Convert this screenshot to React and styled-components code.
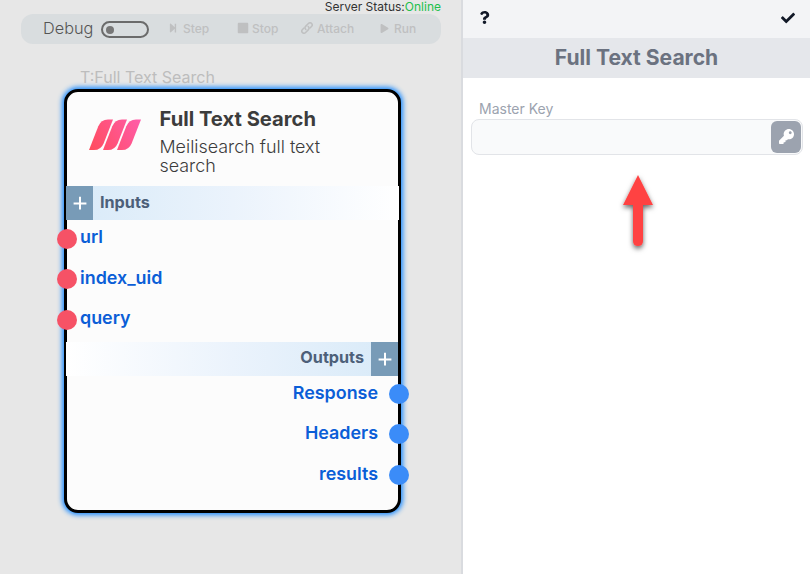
import React from "react";
import styled, { createGlobalStyle } from "styled-components";
import { FaStepForward, FaStop, FaPlay, FaQuestion, FaCheck, FaKey } from "react-icons/fa";

const GlobalStyle = createGlobalStyle`
  * { box-sizing: border-box; }
  body { margin: 0; font-family: Inter, "Liberation Sans", sans-serif; overflow: hidden; }
`;

const Screen = styled.div`
  display: grid;
  grid-template-columns: 463px 347px;
  width: 810px;
  height: 574px;
`;

const Canvas = styled.main`
  background: #e7e7e7;
  border-right: 2px solid #d9dbdf;
  height: 574px;
`;

const Status = styled.div`
  height: 14px;
  padding-right: 20px;
  text-align: right;
  font-size: 12px;
  line-height: 13px;
  color: #333;
  white-space: nowrap;
`;

const Online = styled.span`
  color: #22c04c;
`;

const Toolbar = styled.div`
  display: flex;
  align-items: center;
  width: 420px;
  height: 30px;
  margin-left: 21px;
  padding-left: 22px;
  border-radius: 12px;
  background: #d9dddf;
`;

const DebugLabel = styled.span`
  width: 58px;
  font-size: 16.3px;
  font-weight: 300;
  line-height: 28px;
  margin-bottom: 2px;
  color: #555;
`;

const Switch = styled.span`
  display: flex;
  align-items: center;
  width: 48px;
  height: 17px;
  margin-top: 1px;
  padding-left: 3px;
  border: 2px solid #6b6b6b;
  border-radius: 9px;
`;

const Knob = styled.span`
  width: 8px;
  height: 8px;
  border-radius: 50%;
  background: #777;
`;

const Tool = styled.span`
  display: flex;
  align-items: center;
  gap: ${(p) => p.$gap}px;
  margin-left: ${(p) => p.$before}px;
  width: ${(p) => p.$width}px;
  font-size: 12px;
  font-weight: 500;
  line-height: 28px;
  color: #bfc0c1;
  white-space: nowrap;
  svg { flex: none; margin-bottom: 2px; }
`;

const NodeTitle = styled.div`
  height: 45px;
  margin-left: 80px;
  padding-top: 23px;
  font-size: 16px;
  line-height: 20px;
  color: #bdbdbd;
`;

const Node = styled.section`
  width: 337px;
  height: 424px;
  margin-left: 64px;
  border: 3px solid #000;
  border-radius: 14px;
  background: #fcfcfc;
  box-shadow: 0 0 5px 2px #1e8cff;
`;

const NodeHeader = styled.header`
  display: flex;
  height: 94px;
  padding: 16px 0 0 21.5px;
`;

const Logo = styled.svg`
  width: 52px;
  height: 32px;
  margin: 11px 19px 0 0;
`;

const NodeName = styled.div`
  font-size: 20.2px;
  font-weight: 700;
  line-height: 22px;
  color: #3c3c3c;
  white-space: nowrap;
`;

const NodeDescription = styled.div`
  width: 190px;
  margin-top: 7px;
  font-size: 17.9px;
  font-weight: 300;
  line-height: 19px;
  color: #3c3c3c;
`;

const SectionBar = styled.div`
  display: flex;
  flex-direction: ${(p) => (p.$end ? "row-reverse" : "row")};
  height: 34px;
  margin: ${(p) => (p.$end ? "0 0 0 -1px" : "0 -1px")};
  gap: 7px;
  background: linear-gradient(${(p) => (p.$end ? "270deg" : "90deg")}, #d8eaf8 0%, #ebf3fc 50%, #fff 100%);
  font-size: 16.2px;
  font-weight: 700;
  line-height: ${(p) => (p.$end ? 31 : 32)}px;
  color: #4d6079;
`;

const AddButton = styled.span`
  display: grid;
  place-items: center;
  width: 27px;
  height: 34px;
  background: #789bb7;
`;

const Ports = styled.div`
  display: flow-root;
  height: ${(p) => p.$height}px;
`;

const Port = styled.div`
  display: flex;
  flex-direction: ${(p) => (p.$end ? "row-reverse" : "row")};
  align-items: center;
  gap: ${(p) => (p.$end ? 11 : 3)}px;
  height: 40.5px;
  margin: 0 -11px 0 -10px;
  font-size: 17.9px;
  font-weight: 600;
  color: #0b5ed7;
  &:first-child { margin-top: ${(p) => (p.$end ? -2 : -1.7)}px; }
`;

const PortName = styled.span`
  line-height: 24px;
  padding-bottom: 2.5px;
`;

const Dot = styled.span`
  width: 20px;
  height: 20px;
  border-radius: 50%;
  background: ${(p) => (p.$end ? "#3b8cf8" : "#f65266")};
`;

const Panel = styled.aside`
  background: #fff;
`;

const PanelActions = styled.div`
  display: flex;
  justify-content: space-between;
  height: 38px;
  padding: 11px 15px 0 15px;
  background: #f3f4f6;
  color: #111827;
`;

const PanelTitle = styled.h2`
  height: 40px;
  margin: 0;
  background: #e5e7eb;
  text-align: center;
  font-size: 21.1px;
  font-weight: 700;
  line-height: 40px;
  color: #6b7280;
`;

const Field = styled.div`
  padding: 23px 7px 0 8px;
`;

const FieldLabel = styled.div`
  height: 18px;
  padding-left: 8px;
  font-size: 14px;
  line-height: 16px;
  color: #9ca3af;
`;

const Input = styled.div`
  display: flex;
  justify-content: flex-end;
  align-items: center;
  height: 36px;
  padding-right: 1px;
  border: 1px solid #e2e4e8;
  border-radius: 8px;
  background: #f9fafb;
`;

const KeyButton = styled.span`
  display: grid;
  place-items: center;
  width: 30px;
  height: 32px;
  padding-bottom: 2px;
  border-radius: 6px;
  background: #9ca3af;
  color: #fff;
`;

const Arrow = styled.svg`
  display: block;
  width: 60px;
  height: 100px;
  margin: 10px 0 0 145px;
`;

function Plus() {
  return (
    <svg width="14" height="14" viewBox="0 0 14 14">
      <path d="M7 .8v12.8M.6 7.5h12.8" stroke="#fff" strokeWidth="2" />
    </svg>
  );
}

function ChainLink() {
  return (
    <svg width="12" height="12" viewBox="0 0 12 12" fill="none" stroke="currentColor" strokeWidth="1.5" strokeLinecap="round">
      <path d="M4.8 7.4C3.8 6.3 3.9 5 4.8 4.1L7.4 1.5C8.4.5 9.8.5 10.6 1.4S11.4 3.6 10.5 4.5L9 6" />
      <path d="M7.2 4.6C8.2 5.7 8.1 7 7.2 7.9L4.6 10.5C3.6 11.5 2.2 11.5 1.4 10.6S.6 8.4 1.5 7.5L3 6" />
    </svg>
  );
}

function Section({ title, end, ports, height }) {
  return (
    <>
      <SectionBar $end={end}>
        <AddButton><Plus /></AddButton>
        <span>{title}</span>
      </SectionBar>
      <Ports $height={height}>
        {ports.map((name) => (
          <Port key={name} $end={end}>
            <Dot $end={end} />
            <PortName>{name}</PortName>
          </Port>
        ))}
      </Ports>
    </>
  );
}

export default function App() {
  return (
    <Screen>
      <GlobalStyle />
      <Canvas>
        <Status>Server Status:<Online>Online</Online></Status>
        <Toolbar>
          <DebugLabel>Debug</DebugLabel>
          <Switch><Knob /></Switch>
          <Tool $before={19} $width={50} $gap={5}><FaStepForward size={10} />Step</Tool>
          <Tool $before={19} $width={50} $gap={3}><FaStop size={12} />Stop</Tool>
          <Tool $before={14} $width={60} $gap={4}><ChainLink />Attach</Tool>
          <Tool $before={19} $width={50} $gap={5}><FaPlay size={9} />Run</Tool>
        </Toolbar>
        <NodeTitle>T:Full Text Search</NodeTitle>
        <Node>
          <NodeHeader>
            <Logo viewBox="0 0 52 32">
              <defs>
                <linearGradient id="brand" x1="0" y1="32" x2="52" y2="0" gradientUnits="userSpaceOnUse">
                  <stop stopColor="#ff4c5b" />
                  <stop offset="1" stopColor="#ff5caa" />
                </linearGradient>
              </defs>
              <g fill="url(#brand)">
                <path d="M0 31L9.3 7.3Q12 .5 19 .5H24L14.7 24.2Q12 31 5 31Z" />
                <path d="M14 31L23.3 7.3Q26 .5 33 .5H38L28.7 24.2Q26 31 19 31Z" />
                <path d="M28 31L37.3 7.3Q40 .5 47 .5H52L42.7 24.2Q40 31 33 31Z" />
              </g>
            </Logo>
            <div>
              <NodeName>Full Text Search</NodeName>
              <NodeDescription>Meilisearch full text search</NodeDescription>
            </div>
          </NodeHeader>
          <Section title="Inputs" ports={["url", "index_uid", "query"]} height={121.5} />
          <Section title="Outputs" end ports={["Response", "Headers", "results"]} height={121.5} />
        </Node>
      </Canvas>
      <Panel>
        <PanelActions>
          <FaQuestion size={13} />
          <FaCheck size={14} />
        </PanelActions>
        <PanelTitle>Full Text Search</PanelTitle>
        <Field>
          <FieldLabel>Master Key</FieldLabel>
          <Input><KeyButton><FaKey size={15} /></KeyButton></Input>
        </Field>
        <Arrow viewBox="0 0 60 100">
          <defs>
            <filter id="arrowShadow" x="-50%" y="-20%" width="200%" height="150%">
              <feDropShadow dx="0" dy="2.5" stdDeviation="2.5" floodColor="#000" floodOpacity=".6" />
            </filter>
          </defs>
          <path d="M30 10L45 40H35V76Q35 81 30 81T25 76V40H15Z" fill="#ff4343" filter="url(#arrowShadow)" />
        </Arrow>
      </Panel>
    </Screen>
  );
}
